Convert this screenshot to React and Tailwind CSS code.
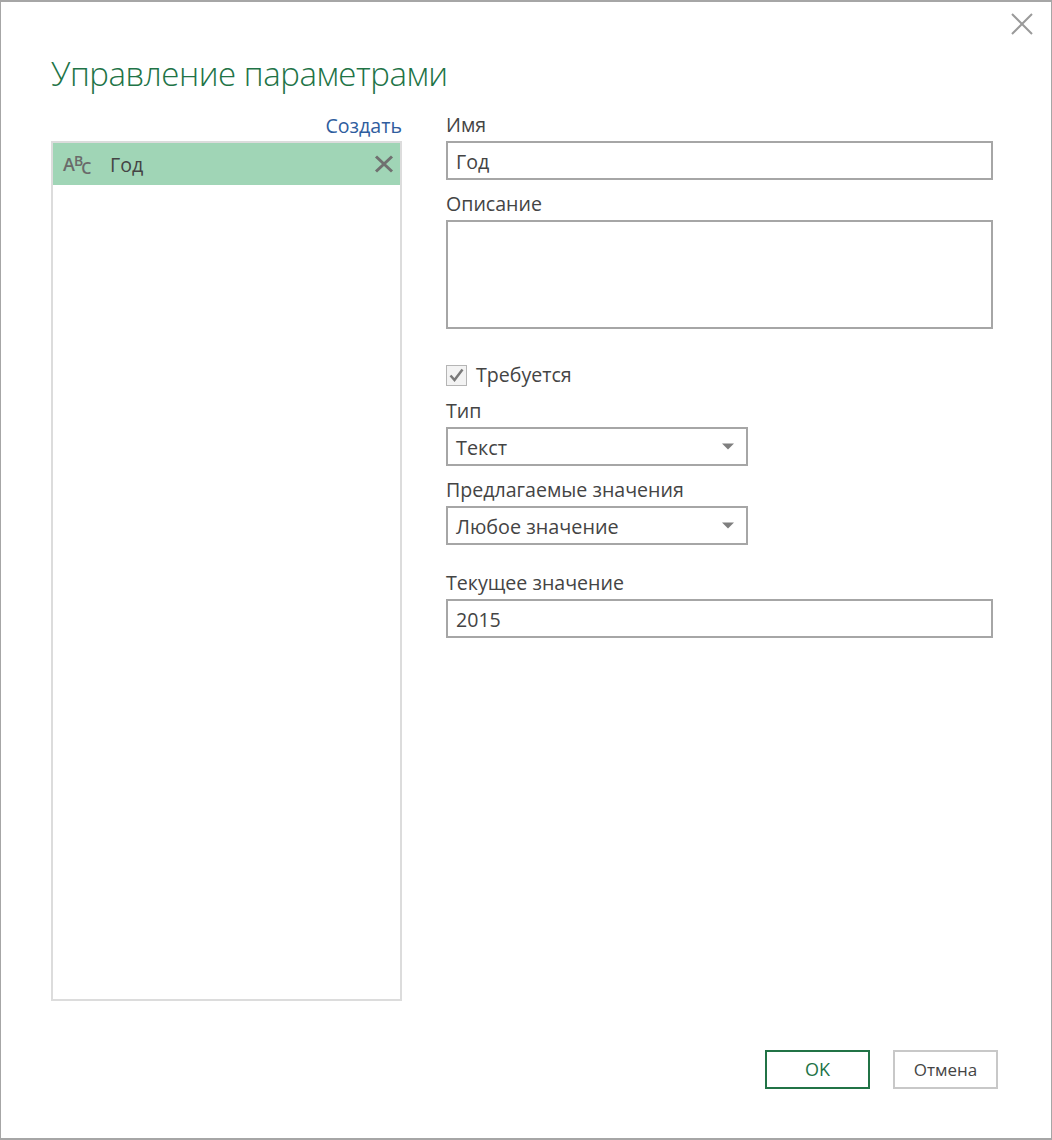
const font = { fontFamily: '"Open Sans", "Noto Sans", sans-serif' };

function Caret() {
  return (
    <svg width="12" height="7" viewBox="0 0 12 7" className="block">
      <path d="M0 0.5H12L6 6.5Z" fill="#7f7f7f" />
    </svg>
  );
}

function Field({ label, value, gap = "" }) {
  return (
    <div className={gap}>
      <div className="h-[26px] text-[19.6px] leading-[26px] text-[#444444]">{label}</div>
      <div className="mt-[3px] h-[39px] w-[547px] border-2 border-[#a6a6a6] pl-[8px] text-[19.6px] leading-[37px] text-[#444444]">
        {value}
      </div>
    </div>
  );
}

function Select({ label, value, className = "" }) {
  return (
    <div className={className}>
      <div className="h-[26px] text-[19.6px] leading-[26px] text-[#444444]">{label}</div>
      <div className="mt-[3px] flex h-[39px] w-[302px] items-center justify-between border-2 border-[#a6a6a6] pl-[8px] pr-[12px] text-[19.8px] text-[#444444]">
        <span className="pt-[2px]">{value}</span>
        <Caret />
      </div>
    </div>
  );
}

export default function App() {
  return (
    <div
      style={font}
      className="relative flex h-[1140px] w-[1052px] flex-col border-2 border-[#a6a6a6] border-l-[1px] border-r-[1px] bg-white"
    >
      <svg width="24" height="24" viewBox="0 0 24 24" className="absolute right-[17px] top-[10px]">
        <path d="M2 2L22 22M22 2L2 22" stroke="#9a9a9a" strokeWidth="2" fill="none" />
      </svg>

      <h1 className="ml-[50px] mt-[48px] h-[48px] text-[33px] font-light leading-[48px] tracking-[-0.45px] text-[#217346]">
        Управление параметрами
      </h1>

      <div className="ml-[50px] mt-[15px] flex flex-1 gap-[44px]">
        <div className="flex w-[351px] flex-col">
          <div className="h-[28px] text-right text-[19.6px] leading-[26px] text-[#2f5d9e]">Создать</div>
          <div className="h-[860px] border-2 border-[#dcdcdc]">
            <div className="flex h-[42px] items-center bg-[#a0d5b6] pl-[10px] pr-[6px]">
              <span className="flex w-[47px] items-baseline font-semibold text-[#6a6a6a]">
                <span className="text-[18px] leading-none">A</span>
                <span className="relative top-[-5px] -ml-[1px] text-[14px] leading-none">B</span>
                <span className="relative top-[3px] -ml-[2px] text-[16px] leading-none">C</span>
              </span>
              <span className="flex-1 pt-[2px] text-[19.6px] text-[#444444]">Год</span>
              <svg width="20" height="18" viewBox="0 0 20 18">
                <path d="M2 1.5L18 16.5M18 1.5L2 16.5" stroke="#707070" strokeWidth="3" fill="none" />
              </svg>
            </div>
          </div>
        </div>

        <div className="flex flex-col">
          <Field label="Имя" value="Год" gap="-mt-[1px]" />
          <div className="mt-[11px]">
            <div className="h-[26px] text-[19.6px] leading-[26px] text-[#444444]">Описание</div>
            <div className="mt-[3px] h-[109px] w-[547px] border-2 border-[#a6a6a6]" />
          </div>

          <div className="mt-[33px] flex h-[26px] items-center">
            <span className="flex h-[21px] w-[21px] items-center justify-center border border-[#b5b5b5] bg-[#f3f3f3]">
              <svg width="15" height="14" viewBox="0 0 15 14">
                <path d="M1.5 7.5L5.5 12L13.5 1.5" stroke="#7a7a7a" strokeWidth="2.5" fill="none" />
              </svg>
            </span>
            <span className="ml-[9px] text-[19.6px] text-[#444444]">Требуется</span>
          </div>

          <Select label="Тип" value="Текст" className="mt-[10px]" />
          <Select label="Предлагаемые значения" value="Любое значение" className="mt-[11px]" />
          <Field label="Текущее значение" value="2015" gap="mt-[25px]" />
        </div>
      </div>

      <div className="mb-[49px] mr-[53px] flex justify-end gap-[23px]">
        <button className="h-[39px] w-[105px] border-2 border-[#217346] text-[18px] text-[#217346]">OK</button>
        <button className="h-[39px] w-[105px] border-2 border-[#c8c8c8] text-[17px] text-[#444444]">Отмена</button>
      </div>
    </div>
  );
}
